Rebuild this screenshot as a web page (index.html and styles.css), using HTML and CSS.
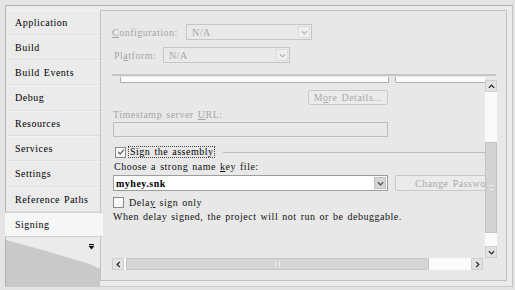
FILE: index.html
```html
<!DOCTYPE html>
<html>
<head>
<meta charset="utf-8">
<link rel="stylesheet" href="styles.css">
</head>
<body>
<div class="frame">
  <nav class="tabs">
    <div class="tab">Application</div>
    <div class="tab">Build</div>
    <div class="tab">Build Events</div>
    <div class="tab">Debug</div>
    <div class="tab">Resources</div>
    <div class="tab">Services</div>
    <div class="tab">Settings</div>
    <div class="tab">Reference Paths</div>
    <div class="tab sel">Signing</div>
    <div class="tabs-foot">
      <svg class="foot-art" viewBox="0 0 94 49" preserveAspectRatio="none">
        <polygon points="0,3 40,14 77,25 86,28 92,31 94,31 94,49 0,49" fill="#c9c9c9"/>
        <rect x="83" y="7" width="5" height="1.2" fill="#111"/>
        <polygon points="82.5,9 88.5,9 85.5,12.5" fill="#111"/>
      </svg>
    </div>
  </nav>
  <main class="panel">
    <div class="row cfg">
      <span class="lbl dis"><u>C</u>onfiguration:</span>
      <div class="combo dis-combo w-cfg"><span class="combo-text">N/A</span><span class="dd dd-dis"><svg viewBox="0 0 8 5"><path d="M1 1 L4 4 L7 1" fill="none" stroke="#aaa" stroke-width="1.2"/></svg></span></div>
    </div>
    <div class="row plat">
      <span class="lbl dis">Pl<u>a</u>tform:</span>
      <div class="combo dis-combo w-plat"><span class="combo-text">N/A</span><span class="dd dd-dis"><svg viewBox="0 0 8 5"><path d="M1 1 L4 4 L7 1" fill="none" stroke="#aaa" stroke-width="1.2"/></svg></span></div>
    </div>
    <div class="sep"></div>
    <div class="viewport">
      <div class="vrow">
        <div class="scroll-content">
          <div class="topboxes"><div class="tb tb1"></div><div class="tb tb2"></div></div>
          <div class="more-row"><div class="btn dis-btn more">M<u>o</u>re Details...</div></div>
          <div class="lbl dis line">Timestamp server <u>U</u>RL:</div>
          <div class="textbox"></div>
          <div class="sign-row">
            <span class="chk checked"><svg viewBox="0 0 9 9"><path d="M1.5 4.5 L3.6 6.8 L7.6 1.8" fill="none" stroke="#555" stroke-width="1.3"/></svg></span>
            <span class="lbl focus">Sign the assembly</span>
            <span class="hline"></span>
          </div>
          <div class="lbl line choose">Choose a strong name <u>k</u>ey file:</div>
          <div class="key-row">
            <div class="combo key"><span class="combo-text strong">myhey.snk</span><span class="dd dd-on"><svg viewBox="0 0 8 5"><path d="M1 1 L4 4 L7 1" fill="none" stroke="#444" stroke-width="1.4"/></svg></span></div>
            <div class="btn dis-btn pwd">Change Password...</div>
          </div>
          <div class="delay-row">
            <span class="chk"></span>
            <span class="lbl">Dela<u>y</u> sign only</span>
          </div>
          <div class="lbl line when">When delay signed, the project will not run or be debuggable.</div>
        </div>
        <div class="vbar">
          <span class="sbtn"><svg viewBox="0 0 8 5"><path d="M1 4 L4 1 L7 4" fill="none" stroke="#222" stroke-width="1.4"/></svg></span>
          <span class="vtrack-a"></span>
          <span class="vthumb"><span class="vgrip"></span></span>
          <span class="vtrack-b"></span>
          <span class="sbtn"><svg viewBox="0 0 8 5"><path d="M1 1 L4 4 L7 1" fill="none" stroke="#222" stroke-width="1.4"/></svg></span>
        </div>
      </div>
      <div class="hrow">
        <div class="hbar">
          <span class="sbtn h"><svg viewBox="0 0 5 8"><path d="M4 1 L1 4 L4 7" fill="none" stroke="#222" stroke-width="1.4"/></svg></span>
          <span class="hthumb"><span class="hgrip"></span></span>
          <span class="htrack"></span>
          <span class="sbtn h"><svg viewBox="0 0 5 8"><path d="M1 1 L4 4 L1 7" fill="none" stroke="#222" stroke-width="1.4"/></svg></span>
        </div>
        <div class="corner"></div>
      </div>
    </div>
  </main>
</div>
</body>
</html>
```

FILE: styles.css
```css
* { box-sizing: border-box; }
html, body { margin: 0; padding: 0; }
body {
  width: 515px;
  height: 290px;
  background: #e4e4e4;
  font-family: "Liberation Serif", "DejaVu Serif", serif;
  font-size: 10px;
  letter-spacing: 0.5px;
  word-spacing: 1.1px;
  color: #111;
  overflow: hidden;
  padding: 5px 0 0 5px;
}
u { text-decoration: underline; text-underline-offset: 1px; }

.frame {
  width: 508px;
  height: 282px;
  border: 1px solid #b3b3b3;
  border-right-color: #c4c4c4;
  border-bottom-color: #c8c8c8;
  background: #ebebeb;
  display: flex;
}

.tabs {
  width: 94px;
  display: flex;
  flex-direction: column;
  padding-top: 3.5px;
  background: #ebebeb;
}
.tab {
  height: 25.3px;
  line-height: 24px;
  padding-left: 9px;
  border-bottom: 1px solid #dedede;
  border-top: 1px solid #f3f3f3;
  white-space: nowrap;
  color: #000;
}
.tab.sel {
  background: #f6f6f6;
  margin-left: -1px;
  padding-left: 10px;
  margin-right: -3px;
  position: relative;
  z-index: 1;
  border-top: 1px solid #d2d2d2;
  border-bottom: 1px solid #d2d2d2;
}
.tabs-foot {
  flex: 1;
  position: relative;
}
.foot-art { display: block; width: 100%; height: 100%; }

.panel {
  width: 407px;
  margin: 4px 0 5px 0;
  height: 271px;
  border: 1px solid #c2c2c2;
  background: #e8e8e8;
  padding: 13px 9px 0 11px;
  display: flex;
  flex-direction: column;
}
.row { display: flex; align-items: center; height: 16px; }
.plat { margin-top: 7px; padding-left: 2px; }
.lbl { white-space: nowrap; }
.dis { color: #a6a6a6; }
.cfg .lbl { width: 74px; }
.plat .lbl { width: 49px; }

.combo {
  height: 16px;
  display: flex;
  align-items: center;
  border: 1px solid #c6c6c6;
  padding-left: 5px;
  position: relative;
  flex: none;
}
.dis-combo { background: #e9e9e9; color: #a8a8a8; }
.w-cfg { width: 126px; }
.w-plat { width: 127px; }
.combo-text { flex: 1; }
.dd {
  width: 12px;
  height: 12px;
  margin-right: 1px;
  display: flex;
  align-items: center;
  justify-content: center;
}
.dd svg { width: 7px; height: 5px; }
.dd-dis { background: #efefef; border: 1px solid #dcdcdc; }
.dd-on { background: #d6d6d6; border: 1px solid #c0c0c0; }

.sep {
  height: 2px;
  background: #c6c6c6;
  margin-top: 11px;
  width: 384px;
}

.viewport {
  width: 385px;
  height: 193px;
  margin-top: 1px;
  display: flex;
  flex-direction: column;
}
.vrow { display: flex; height: 181px; }
.scroll-content {
  width: 373px;
  overflow: hidden;
  padding-left: 1px;
}
.topboxes { display: flex; height: 6px; padding-left: 7px; }
.tb {
  height: 6px;
  background: #fbfbfb;
  border: 1px solid #b0b0b0;
  border-top: none;
  flex: none;
}
.tb1 { width: 269px; }
.tb2 { width: 110px; margin-left: 6px; border-radius: 0 0 0 2px; }

.more-row { margin-top: 7px; padding-left: 195px; height: 15px; }
.btn {
  display: flex;
  align-items: center;
  justify-content: center;
  border: 1px solid #c9c9c9;
  border-radius: 2px;
  white-space: nowrap;
}
.dis-btn { background: #ebebeb; color: #a9a9a9; }
.more { width: 80px; height: 15px; }

.line { height: 10px; line-height: 10px; }
.scroll-content > .lbl.dis.line { margin-top: 5px; }
.textbox {
  margin-top: 2px;
  width: 275px;
  height: 15px;
  border: 1px solid #bcbcbc;
  background: #e8e8e8;
}

.sign-row {
  display: flex;
  align-items: center;
  height: 12px;
  margin-top: 9px;
  padding-left: 2px;
}
.chk {
  width: 11px;
  height: 11px;
  border: 1px solid #8a8a8a;
  background: #f8f8f8;
  display: flex;
  align-items: center;
  justify-content: center;
  flex: none;
}
.chk svg { width: 8px; height: 8px; }
.focus {
  margin-left: 2px;
  padding: 0 1px;
  border: 1px dotted #444;
  line-height: 10px;
  color: #000;
}
.hline {
  flex: 1;
  height: 1px;
  background: #bdbdbd;
  margin-left: 8px;
}

.choose { margin-top: 4px; padding-left: 1px; }
.key-row { display: flex; margin-top: 3px; height: 16px; }
.key { width: 275px; background: #fff; border-color: #9c9c9c; padding-left: 2px; }
.strong { font-weight: bold; color: #000; }
.pwd { width: 129px; height: 16px; margin-left: 7px; flex: none; justify-content: center; }

.delay-row {
  display: flex;
  align-items: center;
  height: 11px;
  margin-top: 6px;
}
.delay-row .lbl { margin-left: 5px; }
.when { margin-top: 4px; }

.vbar {
  width: 12px;
  margin-top: 3px;
  height: 178px;
  display: flex;
  flex-direction: column;
  background: #f7f7f7;
}
.sbtn {
  width: 12px;
  height: 12px;
  background: #e2e2e2;
  border: 1px solid #cfcfcf;
  display: flex;
  align-items: center;
  justify-content: center;
  flex: none;
}
.sbtn svg { width: 7px; height: 5px; }
.sbtn.h svg { width: 5px; height: 7px; }
.vtrack-a { height: 50px; background: #fafafa; }
.vthumb {
  height: 91px;
  background: #d3d3d3;
  border: 1px solid #c4c4c4;
  display: flex;
  align-items: center;
  justify-content: center;
}
.vgrip { width: 5px; height: 5px; border-top: 1px solid #ececec; border-bottom: 1px solid #ececec; }
.vtrack-b { flex: 1; background: #fafafa; }

.hrow { display: flex; height: 12px; }
.hbar {
  width: 371px;
  display: flex;
  background: #fafafa;
}
.hthumb {
  margin-left: 2px;
  width: 303px;
  background: #d6d6d6;
  border: 1px solid #c6c6c6;
  display: flex;
  align-items: center;
  justify-content: center;
}
.hgrip { width: 5px; height: 5px; border-left: 1px solid #efefef; border-right: 1px solid #efefef; }
.htrack { flex: 1; background: #fbfbfb; }
.corner { flex: 1; }
```
